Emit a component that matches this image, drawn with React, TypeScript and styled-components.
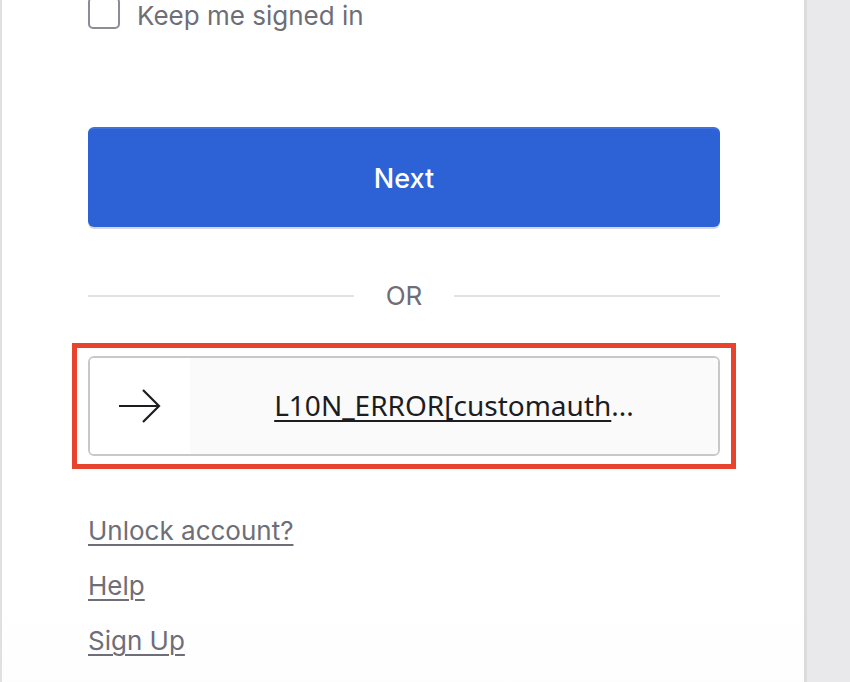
import styled, { createGlobalStyle } from "styled-components";

const GlobalStyle = createGlobalStyle`
  html, body {
    margin: 0;
    padding: 0;
    background: #e9e9ec;
    font-family: Inter, "Noto Sans", sans-serif;
  }
`

const Page = styled.div`
  height: 682px;
  overflow: hidden;
`

const Card = styled.main`
  width: 632px;
  margin-top: -20px;
  padding: 17px 84px 40px 86px;
  background: linear-gradient(#ffffff 80%, #fcfcfc);
  border-left: 2px solid #e0e0e3;
  border-right: 3px solid #dcdcdf;
  min-height: 720px;
`

const CheckRow = styled.label`
  display: flex;
  align-items: center;
  gap: 17px;
  color: #6e6e78;
  font-size: 26px;
  line-height: 26px;
  span:last-child {
    padding-top: 6px;
  }
`

const Box = styled.span`
  width: 28px;
  height: 28px;
  border: 2px solid #8c8c96;
  border-radius: 5px;
  background: #fff;
`

const Primary = styled.button`
  display: block;
  width: 100%;
  height: 100px;
  margin-top: 98px;
  border: none;
  border-top: 2px solid #3f72de;
  border-radius: 6px;
  background: #2d62d6;
  box-shadow: 0 2px 0 #d8d8dc;
  color: #fff;
  font-family: Inter, sans-serif;
  font-size: 27px;
  font-weight: 500;
`

const Divider = styled.div`
  display: flex;
  align-items: center;
  gap: 32px;
  margin-top: 54px;
  color: #6e6e78;
  font-size: 26px;
  line-height: 30px;
  &::before, &::after {
    content: "";
    flex: 1;
    height: 2px;
    background: #e1e1e4;
  }
`

const Highlight = styled.div`
  margin: 32px -16px 0 -16px;
  padding: 8px 11px;
  border: 5px solid #e8432d;
`

const Alt = styled.a`
  display: flex;
  height: 96px;
  border: 2px solid #c8c8cb;
  border-radius: 6px;
  overflow: hidden;
  color: #1d1d21;
  text-decoration: none;
`

const IconCell = styled.span`
  width: 100px;
  display: flex;
  align-items: center;
  justify-content: center;
  background: #fff;
`

const Label = styled.span`
  flex: 1;
  display: flex;
  align-items: center;
  justify-content: center;
  padding-bottom: 2px;
  background: #fafafa;
  font-family: "Noto Sans", "Open Sans", sans-serif;
  font-size: 28px;
  span {
    text-decoration: underline;
    text-underline-offset: 4px;
    text-decoration-thickness: 2px;
  }
`

const Links = styled.ul`
  list-style: none;
  margin: 47px 0 0;
  padding: 0;
  display: flex;
  flex-direction: column;
  gap: 25px;
`

const LinkItem = styled.li`
  font-size: 26px;
  line-height: 30px;
  a {
    color: #6e6e78;
    text-decoration: underline;
    text-underline-offset: 4px;
    text-decoration-thickness: 2px;
  }
`

function App() {
  return (
    <Page>
      <GlobalStyle />
      <Card>
        <CheckRow>
          <Box />
          <span>Keep me signed in</span>
        </CheckRow>
        <Primary>Next</Primary>
        <Divider>OR</Divider>
        <Highlight>
          <Alt href="#">
            <IconCell>
              <svg width="44" height="34" viewBox="0 0 44 34" fill="none" stroke="#1d1d21" strokeWidth="2.2">
                <path d="M1 17h40M25 1l16 16-16 16" />
              </svg>
            </IconCell>
            <Label>
              <span>L10N_ERROR[customauth</span>...
            </Label>
          </Alt>
        </Highlight>
        <Links>
          <LinkItem><a href="#">Unlock account?</a></LinkItem>
          <LinkItem><a href="#">Help</a></LinkItem>
          <LinkItem><a href="#">Sign Up</a></LinkItem>
        </Links>
      </Card>
    </Page>
  )
}

export default App;
